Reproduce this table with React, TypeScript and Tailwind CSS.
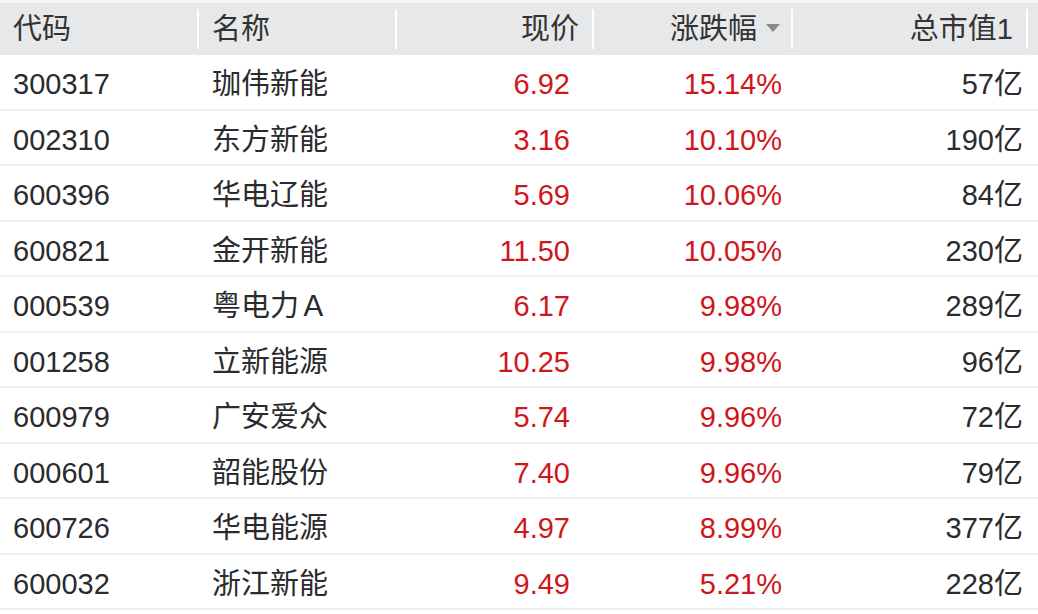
const rows = [
  { code: "300317", name: "珈伟新能", price: "6.92", pct: "15.14%", cap: "57亿" },
  { code: "002310", name: "东方新能", price: "3.16", pct: "10.10%", cap: "190亿" },
  { code: "600396", name: "华电辽能", price: "5.69", pct: "10.06%", cap: "84亿" },
  { code: "600821", name: "金开新能", price: "11.50", pct: "10.05%", cap: "230亿" },
  { code: "000539", name: "粤电力Ａ", price: "6.17", pct: "9.98%", cap: "289亿" },
  { code: "001258", name: "立新能源", price: "10.25", pct: "9.98%", cap: "96亿" },
  { code: "600979", name: "广安爱众", price: "5.74", pct: "9.96%", cap: "72亿" },
  { code: "000601", name: "韶能股份", price: "7.40", pct: "9.96%", cap: "79亿" },
  { code: "600726", name: "华电能源", price: "4.97", pct: "8.99%", cap: "377亿" },
  { code: "600032", name: "浙江新能", price: "9.49", pct: "5.21%", cap: "228亿" },
];

export default function App() {
  return (
    <div
      className="w-[1038px] h-[614px] bg-white overflow-hidden text-[29px] leading-none"
      style={{ fontFamily: '"Liberation Sans", "Noto Sans CJK SC", sans-serif' }}
    >
      {/* top strip */}
      <div className="h-[3px] bg-[#f7f7f8]" />

      {/* Header */}
      <div className="flex h-[52px] items-center bg-[#e7e8ea] text-[#333333]">
        <div className="flex h-[40px] w-[199px] items-center border-r-2 border-white pl-[13px]">代码</div>
        <div className="flex h-[40px] w-[198px] items-center border-r-2 border-white pl-[13px]">名称</div>
        <div className="flex h-[40px] w-[197px] items-center justify-end border-r-2 border-white pr-[13px]">现价</div>
        <div className="flex h-[40px] w-[199px] items-center justify-end border-r-2 border-white pr-[11px]">
          <span>涨跌幅</span>
          <svg width="14" height="8" viewBox="0 0 14 8" className="ml-[9px] mb-[2px]">
            <path d="M0 0H14L7 8Z" fill="#8a8a8a" />
          </svg>
        </div>
        <div className="flex h-[40px] w-[235px] items-center justify-end border-r-2 border-white pr-[13px]">总市值1</div>
        <div className="flex-1" />
      </div>

      {/* Rows */}
      {rows.map((r) => (
        <div key={r.code} className="flex h-[55.5px] items-center border-b-2 border-[#efefef] pt-[6px] text-[#2a2b2e]">
          <div className="w-[199px] pl-[13px]">{r.code}</div>
          <div className="w-[198px] pl-[13px]">{r.name}</div>
          <div className="w-[197px] pr-[24px] text-right text-[#d0161b]">{r.price}</div>
          <div className="w-[199px] pr-[11px] text-right text-[#d0161b]">{r.pct}</div>
          <div className="w-[235px] pr-[5px] text-right">{r.cap}</div>
        </div>
      ))}
    </div>
  );
}
